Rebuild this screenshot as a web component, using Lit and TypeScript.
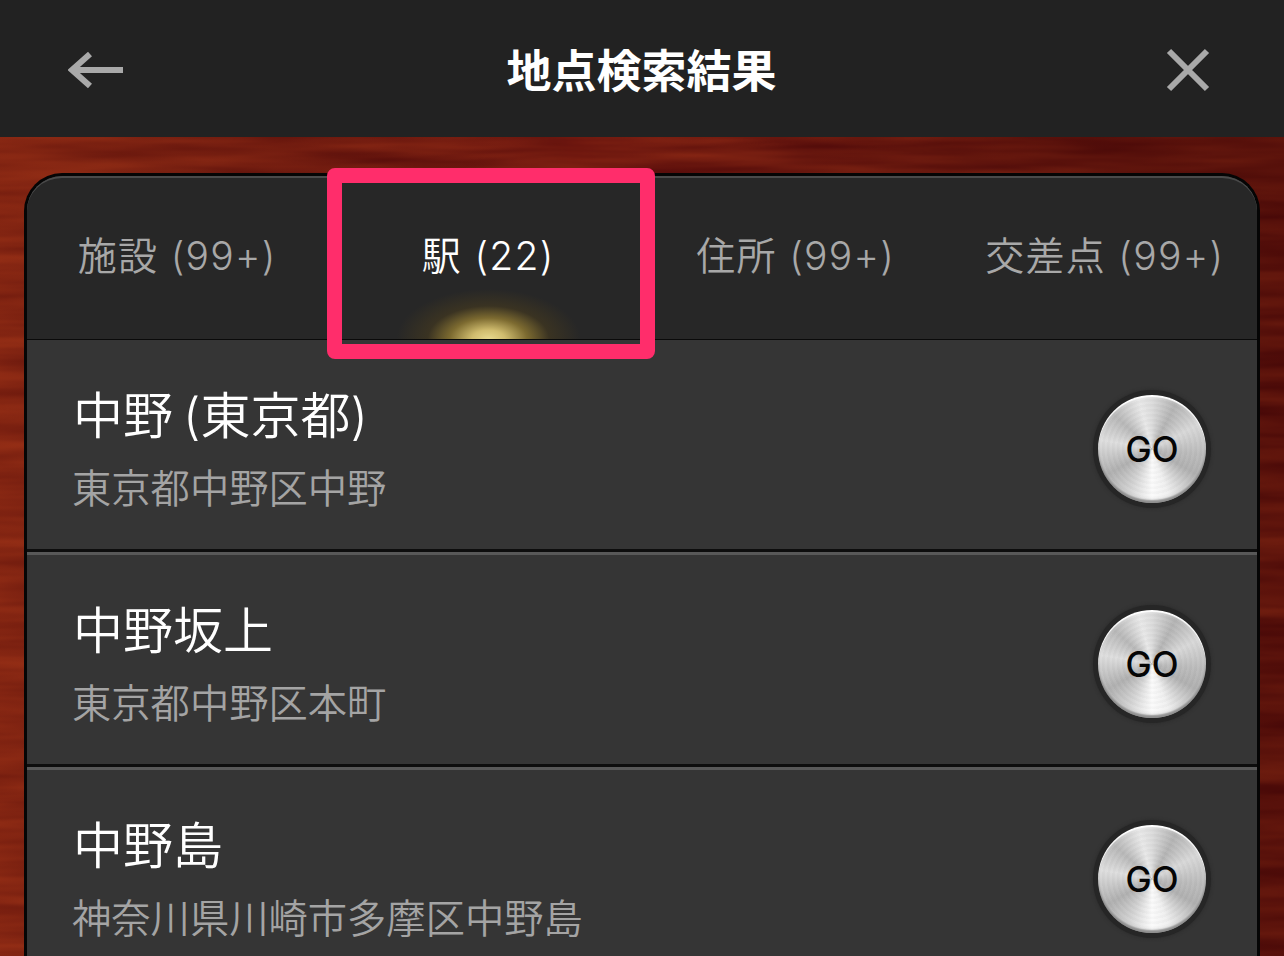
import { LitElement, html, css } from "lit";
import { customElement } from "lit/decorators.js";

const wood = `url("data:image/svg+xml,${encodeURIComponent(
  `<svg xmlns='http://www.w3.org/2000/svg' width='1284' height='956'><defs><filter id='w' x='0' y='0' width='100%' height='100%' color-interpolation-filters='sRGB'><feTurbulence type='fractalNoise' baseFrequency='0.005 0.06' numOctaves='3' seed='7'/><feColorMatrix values='0.3 0 0 0 0.3  0.16 0 0 0 0.02  0.06 0 0 0 0.03  0 0 0 0 1'/></filter><linearGradient id='g' x1='0' x2='1' y1='0' y2='0'><stop offset='0' stop-color='#b8481a' stop-opacity='.25'/><stop offset='.45' stop-color='#000' stop-opacity='0'/><stop offset='1' stop-color='#200000' stop-opacity='.3'/></linearGradient></defs><rect width='1284' height='956' filter='url(#w)'/><rect width='1284' height='956' fill='url(#g)'/></svg>`
)}")`;

const ROWS = [
  { name: "中野 (東京都)", addr: "東京都中野区中野" },
  { name: "中野坂上", addr: "東京都中野区本町" },
  { name: "中野島", addr: "神奈川県川崎市多摩区中野島" },
];

const TABS = ["施設 (99+)", "駅 (22)", "住所 (99+)", "交差点 (99+)"];

@customElement("app-root")
export class AppRoot extends LitElement {
  static styles = css`
    :host {
      display: flex;
      flex-direction: column;
      width: 1284px;
      height: 956px;
      overflow: hidden;
      background-color: #6a1a10;
      font-family: Inter, "Noto Sans CJK JP", sans-serif;
    }
    .wood {
      display: flex;
      flex-direction: column;
      flex: 1;
      min-height: 0;
      padding: 36px 24px 0;
      background-size: 1284px 956px;
    }
    header {
      flex: none;
      height: 137px;
      display: flex;
      align-items: center;
      justify-content: space-between;
      padding: 3px 74px 0 68px;
      background: #222222;
      box-sizing: border-box;
    }
    h1 {
      margin: 3px 7px 0 0;
      color: #fff;
      font-size: 45px;
      font-weight: 700;
      line-height: 1;
    }
    .icon {
      display: block;
      stroke: #a9a9a9;
      fill: none;
    }
    .panel {
      flex: 1;
      min-height: 0;
      border: 3px solid #050505;
      border-bottom: 0;
      border-radius: 38px 38px 0 0;
      background: #353535;
    }
    .tabs {
      display: grid;
      grid-template-columns: repeat(4, 1fr);
      height: 161px;
      background: #272727;
      border-top: 2px solid #4a4a4a;
      border-bottom: 1px solid #0a0a0a;
      border-radius: 35px 35px 0 0;
      box-sizing: content-box;
    }
    .tab {
      position: relative;
      display: flex;
      align-items: center;
      justify-content: center;
      color: #a8a8a8;
      font-size: 39px;
      font-weight: 350;
      letter-spacing: 1.3px;
      white-space: nowrap;
      padding-bottom: 11px;
      box-sizing: border-box;
    }
    .tab:first-child {
      padding-right: 7px;
    }
    .tab:last-child {
      padding-left: 3px;
    }
    .tab.active {
      color: #fff;
      background: radial-gradient(
        ellipse 92px 50px at 50% 100%,
        #e8d98e 0,
        #d0bc6e 18%,
        #7c6a30 42%,
        #3a3322 66%,
        transparent 100%
      );
    }
    .mark {
      position: absolute;
      left: -7.5px;
      right: -13px;
      top: -10px;
      bottom: -20px;
      border: 15px solid #ff2d6b;
      border-radius: 8px;
      z-index: 2;
      pointer-events: none;
    }
    .row {
      display: flex;
      align-items: center;
      justify-content: space-between;
      height: 215px;
      box-sizing: border-box;
      padding: 0 51px 0 46px;
      border-top: 3px solid #585858;
      border-bottom: 3px solid #0d0d0d;
    }
    .tabs + .row {
      border-top: 0;
      height: 212px;
    }
    .text {
      display: flex;
      flex-direction: column;
      gap: 21px;
      margin-top: 9px;
    }
    .name {
      color: #fff;
      font-size: 50px;
      font-weight: 350;
      line-height: 58px;
      word-spacing: -4px;
      white-space: nowrap;
    }
    .addr {
      color: #a4a4a4;
      font-size: 39.3px;
      font-weight: 350;
      line-height: 46px;
      white-space: nowrap;
      margin-left: -1px;
    }
    .go {
      flex: none;
      width: 108px;
      height: 108px;
      border-radius: 50%;
      display: grid;
      place-items: center;
      margin-top: 8px;
      color: #050505;
      font-size: 35px;
      font-weight: 500;
      box-shadow: 0 0 0 5px #262626, 0 0 3px 6px #2e2e2e, inset 0 2px 1px #fff, inset 0 -3px 2px #8e8e8e;
      background:
        repeating-radial-gradient(circle at 50% 50%, rgba(255, 255, 255, 0.025) 0 2px, rgba(0, 0, 0, 0.02) 3px 5px),
        conic-gradient(
          from 0deg,
          #dcdcdc 0deg,
          #b4b4b4 28deg,
          #d8d8d8 62deg,
          #bcbcbc 95deg,
          #b0b0b0 120deg,
          #f0f0f0 160deg,
          #fbfbfb 180deg,
          #d4d4d4 208deg,
          #b0b0b0 240deg,
          #dedede 280deg,
          #b8b8b8 312deg,
          #e8e8e8 345deg,
          #dcdcdc 360deg
        );
    }
  `;

  render() {
    return html`
      <header>
        <svg class="icon" width="56" height="38" viewBox="0 0 56 38">
          <path d="M3 19H55M22 3 4 19 22 35" stroke-width="6" />
        </svg>
        <h1>地点検索結果</h1>
        <svg class="icon" width="44" height="44" viewBox="0 0 44 44">
          <path d="M3 3 41 41M41 3 3 41" stroke-width="6" />
        </svg>
      </header>
      <div class="wood" style="background-image:${wood}">
        <div class="panel">
          <div class="tabs">
            ${TABS.map(
              (t, i) => html`<div class="tab ${i === 1 ? "active" : ""}">
                ${t}${i === 1 ? html`<div class="mark"></div>` : ""}
              </div>`
            )}
          </div>
          ${ROWS.map(
            (r) => html`<div class="row">
              <div class="text">
                <div class="name">${r.name}</div>
                <div class="addr">${r.addr}</div>
              </div>
              <div class="go">GO</div>
            </div>`
          )}
        </div>
      </div>
    `;
  }
}
